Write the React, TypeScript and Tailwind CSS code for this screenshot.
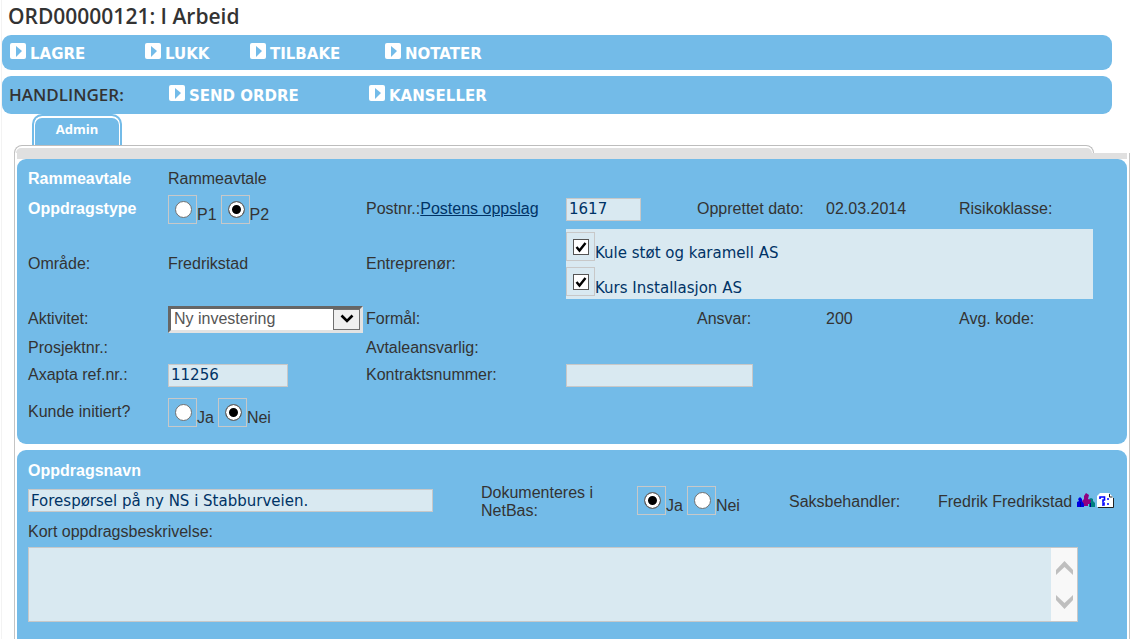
import { useState } from 'react';
import type { ReactNode } from 'react';
import { clsx } from 'clsx';

interface ActionProps {
    label: string;
    className?: string;
}

interface RadioGroupProps {
    name: string;
    legend: string;
    options: string[];
    initial: string;
}

const inputClasses =
    "h-[23px] border border-[#c8c8c8] bg-[#d9e9f1] px-[2px] font-['DejaVu_Sans',Verdana,sans-serif] text-[15px] leading-5 text-[#003366] outline-none";

function Action({ label, className }: ActionProps) {
    return (
        <button type="button" className={clsx('flex items-start gap-1 text-left', className)}>
            <svg viewBox="0 0 16 16" className="size-4 shrink-0">
                <rect width="16" height="16" rx="2" fill="#fff" />
                <path d="M6 3v11l6-6z" fill="#73bbe8" />
            </svg>
            <span className="pt-px font-['DejaVu_Sans',Verdana,sans-serif] text-[15px] leading-5 font-bold">
                {label}
            </span>
        </button>
    );
}

function RadioGroup({ name, legend, options, initial }: RadioGroupProps) {
    const [value, setValue] = useState(initial);

    return (
        <div role="radiogroup" aria-label={legend} className="flex gap-1">
            {options.map((option) => (
                <label key={option} className="flex items-end">
                    <span className="flex size-[29px] items-center justify-center border border-[#c8c8c8] pl-[2px]">
                        <input
                            type="radio"
                            name={name}
                            checked={value === option}
                            onChange={() => setValue(option)}
                            className="size-[17px] appearance-none rounded-full border border-[#707070] bg-white checked:bg-black checked:shadow-[inset_0_0_0_3px_#fff]"
                        />
                    </span>
                    <span className="leading-[18px]">{option}</span>
                </label>
            ))}
        </div>
    );
}

function Contractor({ name }: { name: string }) {
    return (
        <label className="flex h-[35px] items-start">
            <span className="relative flex size-[29px] items-center justify-center border border-[#c8c8c8]">
                <input
                    type="checkbox"
                    defaultChecked
                    className="peer size-4 appearance-none border border-[#555] bg-white"
                />
                <svg
                    viewBox="0 0 16 16"
                    className="pointer-events-none absolute hidden size-4 peer-checked:block"
                >
                    <path d="M3.5 8l3 3.5L12.5 4" fill="none" stroke="#000" strokeWidth="2.4" />
                </svg>
            </span>
            <span className="pt-[11px] font-['DejaVu_Sans',Verdana,sans-serif] text-[15px] leading-5 text-[#003366]">
                {name}
            </span>
        </label>
    );
}

function Heading({ children }: { children: ReactNode }) {
    return <h2 className="font-bold text-white">{children}</h2>;
}

export default function App() {
    return (
        <div className="flex min-h-screen flex-col bg-white font-['Liberation_Sans',Arial,sans-serif] text-base leading-[18px] text-[#333]">
            <div className="ml-px flex flex-1 flex-col border-l border-[#f3f3f3]">
                <h1 className="h-[35px] pt-1 pl-[6px] font-['Trebuchet_MS','Open_Sans',sans-serif] text-[21px] leading-6 font-semibold">
                    ORD00000121: I Arbeid
                </h1>

                <nav className="mr-7 flex h-[35px] rounded-[9px] bg-[#73bbe8] pt-2 pl-2 text-white">
                    <Action label="LAGRE" className="w-[135px]" />
                    <Action label="LUKK" className="w-[105px]" />
                    <Action label="TILBAKE" className="w-[135px]" />
                    <Action label="NOTATER" />
                </nav>

                <nav className="mt-[6px] mr-7 flex h-[38px] rounded-[9px] bg-[#73bbe8] pt-[9px] pl-[7px] text-white">
                    <h2 className="w-40 font-['Trebuchet_MS','Open_Sans',sans-serif] text-[17px] leading-5 font-semibold text-[#333]">
                        HANDLINGER:
                    </h2>
                    <Action label="SEND ORDRE" className="w-[200px]" />
                    <Action label="KANSELLER" />
                </nav>

                <div className="flex pl-[30px]">
                    <a
                        href="#admin"
                        className="flex h-[31px] w-[90px] justify-center rounded-t-[10px] border-2 border-b-0 border-[#73bbe8] bg-[#73bbe8] pt-[3px] font-['Trebuchet_MS','Open_Sans',sans-serif] text-[13px] leading-5 font-bold text-white shadow-[inset_0_1px_0_1px_#fff]"
                    >
                        Admin
                    </a>
                </div>

                <div className="mr-[46px] ml-3 flex h-2 rounded-t-lg border border-b-0 border-[#bdbdbd] px-px pt-[2px]">
                    <div className="flex-1 rounded-t-md bg-[#e0e0e0]" />
                </div>

                <main
                    id="admin"
                    className="mr-[10px] ml-3 flex flex-1 flex-col border-x border-[#c4c4c4] px-[2px]"
                >
                    <div className="h-[6px] bg-[#e0e0e0]" />

                    <section className="grid grid-cols-[140fr_198fr_200fr_131fr_129fr_133fr_168fr] grid-rows-[30px_30px_80px_30px_27px_28px_46px] items-center rounded-[9px] bg-[#73bbe8] pt-[5px] pb-[9px] pl-[11px]">
                        <Heading>Rammeavtale</Heading>
                        <span className="col-span-6">Rammeavtale</span>

                        <Heading>Oppdragstype</Heading>
                        <RadioGroup
                            name="type"
                            legend="Oppdragstype"
                            options={['P1', 'P2']}
                            initial="P2"
                        />
                        <label htmlFor="postnr">
                            Postnr.:
                            <a href="#oppslag" className="text-[#003366] underline">
                                Postens oppslag
                            </a>
                        </label>
                        <input id="postnr" defaultValue="1617" className={clsx(inputClasses, 'w-[75px]')} />
                        <span>Opprettet dato:</span>
                        <span>02.03.2014</span>
                        <span>Risikoklasse:</span>

                        <span>Område:</span>
                        <span>Fredrikstad</span>
                        <span>Entreprenør:</span>
                        <div className="col-span-4 mr-[34px] h-[70px] bg-[#d9e9f1] pt-[3px]">
                            <Contractor name="Kule støt og karamell AS" />
                            <Contractor name="Kurs Installasjon AS" />
                        </div>

                        <label htmlFor="aktivitet">Aktivitet:</label>
                        <div className="relative mr-[3px]">
                            <select
                                id="aktivitet"
                                className="block h-[27px] w-full appearance-none border-3 border-t-[#666] border-r-[#e3e3e3] border-b-[#e3e3e3] border-l-[#666] bg-white pl-[3px] leading-5 text-[#555] outline-none"
                            >
                                <option>Ny investering</option>
                            </select>
                            <span className="pointer-events-none absolute top-[3px] right-[3px] flex h-[21px] w-[27px] items-center justify-center border border-[#707070] bg-[#f0f0f0]">
                                <svg viewBox="0 0 14 10" className="h-[10px] w-[14px]">
                                    <path d="M1.5 1.5L7 7l5.5-5.5" fill="none" stroke="#000" strokeWidth="2.6" />
                                </svg>
                            </span>
                        </div>
                        <span className="col-span-2">Formål:</span>
                        <span>Ansvar:</span>
                        <span>200</span>
                        <span>Avg. kode:</span>

                        <span className="col-span-2">Prosjektnr.:</span>
                        <span className="col-span-5">Avtaleansvarlig:</span>

                        <label htmlFor="axapta">Axapta ref.nr.:</label>
                        <input id="axapta" defaultValue="11256" className={clsx(inputClasses, 'w-[120px]')} />
                        <label htmlFor="kontrakt">Kontraktsnummer:</label>
                        <input id="kontrakt" className={clsx(inputClasses, 'col-span-4 w-[187px]')} />

                        <span>Kunde initiert?</span>
                        <RadioGroup
                            name="kunde"
                            legend="Kunde initiert?"
                            options={['Ja', 'Nei']}
                            initial="Nei"
                        />
                    </section>

                    <section className="mt-[6px] flex-1 rounded-t-[9px] bg-[#73bbe8] pt-3 pb-4 pl-[11px]">
                        <div className="grid grid-cols-[453fr_156fr_152fr_149fr_189fr]">
                            <div>
                                <label htmlFor="navn" className="block font-bold text-white">
                                    Oppdragsnavn
                                </label>
                                <input
                                    id="navn"
                                    defaultValue="Forespørsel på ny NS i Stabburveien."
                                    className={clsx(inputClasses, 'mt-[9px] block w-[405px]')}
                                />
                            </div>
                            <span className="mt-[22px]">
                                Dokumenteres i<br />
                                NetBas:
                            </span>
                            <div className="mt-6">
                                <RadioGroup
                                    name="netbas"
                                    legend="Dokumenteres i NetBas"
                                    options={['Ja', 'Nei']}
                                    initial="Ja"
                                />
                            </div>
                            <span className="mt-[31px]">Saksbehandler:</span>
                            <span className="mt-[31px] flex items-start whitespace-nowrap">
                                Fredrik Fredrikstad
                                <button type="button" aria-label="Velg person" className="ml-[5px]">
                                    <svg viewBox="0 0 19 16" className="h-4 w-[19px]">
                                        <path d="M0 14V9l2-1-1-2 2-2 2 2v2l2 2v4z" fill="#0000e0" />
                                        <path d="M12 14V9l1-1-1-2 2-1 2 1v2l2 2v4z" fill="#008080" />
                                        <path d="M7 13v-2L5 8l2-2V3l2-3 3 2-1 4 3 1-1 4h-2v2z" fill="#900080" />
                                        <path d="M3.500 9v5M13.500 10v4" stroke="#000090" />
                                    </svg>
                                </button>
                                <button type="button" aria-label="Kontroller navn" className="ml-px">
                                    <svg viewBox="0 0 17 16" className="h-4 w-[17px]">
                                        <path d="M3 0h9l4 4v10H0V3z" fill="#fff" />
                                        <path d="M1 14.5h15.500V5M12.5 1v3h3" fill="none" stroke="#222" />
                                        <path
                                            d="M3 6V4h4.500v3H6v2M5 10h2v2H5M10 6h2M10 11h2"
                                            fill="none"
                                            stroke="#0000ff"
                                            strokeWidth="1.6"
                                        />
                                    </svg>
                                </button>
                            </span>
                        </div>

                        <label htmlFor="beskrivelse" className="mt-[3px] block">
                            Kort oppdragsbeskrivelse:
                        </label>
                        <div className="mt-[6px] mr-[49px] flex h-[75px] border border-[#c8c8c8] bg-[#d9e9f1]">
                            <textarea
                                id="beskrivelse"
                                className="flex-1 resize-none overflow-hidden px-1 font-['DejaVu_Sans',Verdana,sans-serif] text-[15px] text-[#003366] outline-none"
                            />
                            <div className="flex w-[26px] flex-col items-center justify-between bg-[#f8f8f8] pt-[13px] pb-3">
                                <svg viewBox="0 0 17 14" className="h-[14px] w-[17px]">
                                    <path d="M0 9L8.5 0 17 9v5L8.5 6 0 14z" fill="#bfbfbf" />
                                </svg>
                                <svg viewBox="0 0 17 14" className="h-[14px] w-[17px]">
                                    <path d="M0 5l8.5 9L17 5V0L8.5 8 0 0z" fill="#bfbfbf" />
                                </svg>
                            </div>
                        </div>
                    </section>
                </main>
            </div>
        </div>
    );
}
